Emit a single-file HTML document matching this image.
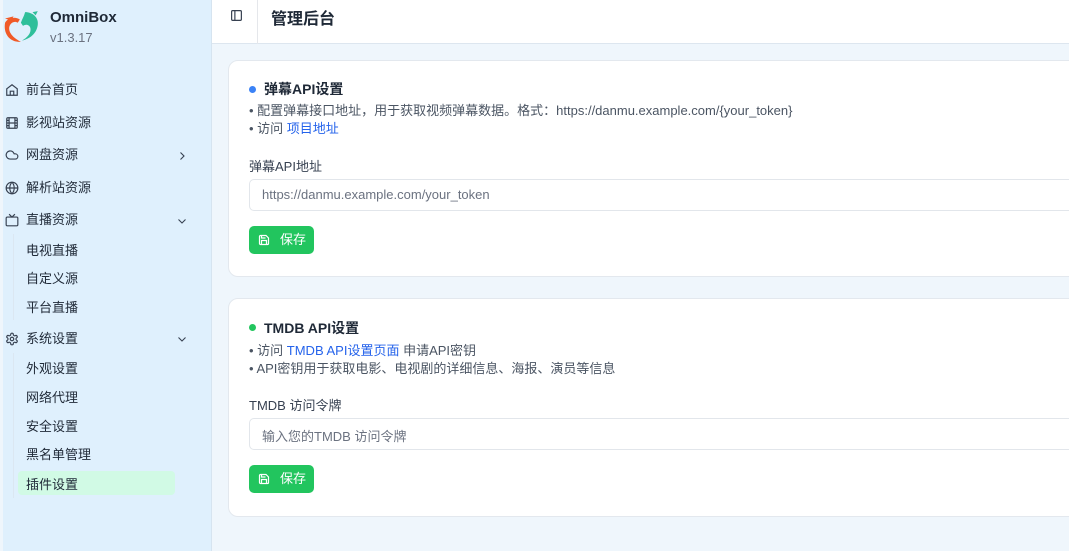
<!DOCTYPE html><html><head><meta charset="utf-8"><style>
*{box-sizing:border-box;margin:0;padding:0}
body{width:1069px;height:551px;overflow:hidden;background:#eff6fc;font-family:"Liberation Sans","Noto Sans CJK SC",sans-serif;color:#1f2937;position:relative}
.sb{position:absolute;left:3px;top:0;width:209px;height:551px;background:#dff0fd;border-right:1px solid #d6e4f0}
.logo{position:absolute;left:4px;top:11px}
.brand{position:absolute;left:50px;top:9px;font-size:15px;font-weight:bold;color:#1f2937}
.ver{position:absolute;left:50px;top:30px;font-size:13px;color:#6b7280}
.it{position:absolute;left:0;font-size:13px;color:#1f2937;height:20px;line-height:20px}
.it svg{position:absolute;left:5px;top:3px}
.it span{position:absolute;left:26px;white-space:nowrap}
.ch{position:absolute;left:176px;width:12px;height:12px}
.sub{position:absolute;left:26px;font-size:13px;white-space:nowrap}
.act{position:absolute;left:18px;top:471px;width:157px;height:24px;background:#d1fae5;border-radius:4px}
.vl{position:absolute;left:13px;width:1px;background:#dbe7f2}
.hd{position:absolute;left:212px;top:0;right:0;height:44px;background:#fff;border-bottom:1px solid #dde6ef}
.hd .t{position:absolute;left:59px;top:5px;font-size:16px;font-weight:bold;color:#1f2937}
.hd .sep{position:absolute;left:45px;top:0;width:1px;height:44px;background:#e5e7eb}
.card{position:absolute;left:228px;width:860px;background:#fff;border:1px solid #e3e8ee;border-radius:10px}
.ti{position:absolute;font-size:14px;font-weight:bold}
.dot{position:absolute;left:249px;width:7px;height:7px;border-radius:50%}
.ln{position:absolute;left:249px;font-size:13px;color:#4b5563;white-space:nowrap}
.ln a{color:#2563eb}
.lab{position:absolute;left:249px;font-size:13px;color:#374151}
.inp{position:absolute;left:249px;width:840px;height:32px;border:1px solid #e2e6eb;border-radius:5px;font-size:13px;color:#6b7280;padding:7px 12px}
.btn{position:absolute;left:249px;width:65px;height:28px;background:#22c55e;border-radius:5px;color:#fff;font-size:13px;line-height:28px}
.btn svg{position:absolute;left:9px;top:8px}
.btn span{position:absolute;left:31px}
</style></head><body>
<div class="sb"></div>
<svg class="logo" width="38" height="34" viewBox="0 0 36 32"><path d="M1 11c3-5 10-6 14-3l-2 3c-3-2-7 0-8 4-1 6 5 11 11 14-9 1-17-6-15-18z" fill="#f05a28"/><path d="M1 7l6 2 2-4z" fill="#f05a28"/><path d="M20 1c7 0 13 5 12 12-1 8-7 13-15 15 5-3 9-7 8-12-1-3-4-4-7-2l-2-3c1-3 3-6 4-10z" fill="#2fbf9a"/><path d="M27 1l5-1-2 4z" fill="#2fbf9a"/></svg>
<div class="brand">OmniBox</div><div class="ver">v1.3.17</div>
<div class="it" style="top:80px"><svg width="14" height="14" viewBox="0 0 24 24" fill="none" stroke="#374151" stroke-width="2"><path d="M3 10l9-7 9 7v11H3z"/><path d="M9 21v-7h6v7"/></svg><span>前台首页</span></div>
<div class="it" style="top:113px"><svg width="14" height="14" viewBox="0 0 24 24" fill="none" stroke="#374151" stroke-width="2"><rect x="3" y="3" width="18" height="18" rx="2"/><path d="M7 3v18M17 3v18M3 12h18M3 7.5h4M3 16.5h4M17 7.5h4M17 16.5h4"/></svg><span>影视站资源</span></div>
<div class="it" style="top:145px"><svg width="14" height="14" viewBox="0 0 24 24" fill="none" stroke="#374151" stroke-width="2"><path d="M17.5 19H9a7 7 0 1 1 6.7-9h1.8a4.5 4.5 0 1 1 0 9z"/></svg><span>网盘资源</span></div>
<svg class="ch" style="top:150px" viewBox="0 0 24 24" fill="none" stroke="#374151" stroke-width="2.2"><path d="M9 5l7 7-7 7"/></svg>
<div class="it" style="top:178px"><svg width="14" height="14" viewBox="0 0 24 24" fill="none" stroke="#374151" stroke-width="2"><circle cx="12" cy="12" r="10"/><path d="M2 12h20M12 2a15 15 0 0 1 0 20M12 2a15 15 0 0 0 0 20"/></svg><span>解析站资源</span></div>
<div class="it" style="top:210px"><svg width="14" height="14" viewBox="0 0 24 24" fill="none" stroke="#374151" stroke-width="2"><rect x="2" y="7" width="20" height="15" rx="2"/><path d="M17 2l-5 5-5-5"/></svg><span>直播资源</span></div>
<svg class="ch" style="top:215px" viewBox="0 0 24 24" fill="none" stroke="#374151" stroke-width="2.2"><path d="M5 9l7 7 7-7"/></svg>
<div class="vl" style="top:234px;height:86px"></div>
<div class="sub" style="top:240px">电视直播</div><div class="sub" style="top:268px">自定义源</div><div class="sub" style="top:297px">平台直播</div>
<div class="it" style="top:329px"><svg width="14" height="14" viewBox="0 0 24 24" fill="none" stroke="#374151" stroke-width="2"><circle cx="12" cy="12" r="3"/><path d="M12.2 2h-.4a2 2 0 0 0-2 2v.2a2 2 0 0 1-1 1.7l-.4.3a2 2 0 0 1-2 0l-.2-.1a2 2 0 0 0-2.7.7l-.2.4a2 2 0 0 0 .7 2.7l.2.1a2 2 0 0 1 1 1.7v.5a2 2 0 0 1-1 1.8l-.2.1a2 2 0 0 0-.7 2.7l.2.4a2 2 0 0 0 2.7.7l.2-.1a2 2 0 0 1 2 0l.4.3a2 2 0 0 1 1 1.7v.2a2 2 0 0 0 2 2h.4a2 2 0 0 0 2-2v-.2a2 2 0 0 1 1-1.7l.4-.3a2 2 0 0 1 2 0l.2.1a2 2 0 0 0 2.7-.7l.2-.4a2 2 0 0 0-.7-2.7l-.2-.1a2 2 0 0 1-1-1.8v-.5a2 2 0 0 1 1-1.7l.2-.1a2 2 0 0 0 .7-2.7l-.2-.4a2 2 0 0 0-2.7-.7l-.2.1a2 2 0 0 1-2 0l-.4-.3a2 2 0 0 1-1-1.7V4a2 2 0 0 0-2-2z"/></svg><span>系统设置</span></div>
<svg class="ch" style="top:333px" viewBox="0 0 24 24" fill="none" stroke="#374151" stroke-width="2.2"><path d="M5 9l7 7 7-7"/></svg>
<div class="vl" style="top:353px;height:145px"></div>
<div class="act"></div>
<div class="sub" style="top:358px">外观设置</div><div class="sub" style="top:387px">网络代理</div><div class="sub" style="top:416px">安全设置</div><div class="sub" style="top:444px">黑名单管理</div><div class="sub" style="top:474px">插件设置</div>
<div class="hd"><svg style="position:absolute;left:18px;top:9px" width="13" height="13" viewBox="0 0 24 24" fill="none" stroke="#374151" stroke-width="2.2"><rect x="3" y="3" width="18" height="18" rx="2"/><path d="M9 3v18"/></svg><div class="sep"></div><div class="t">管理后台</div></div>
<div class="card" style="top:60px;height:217px"></div>
<div class="dot" style="top:86px;background:#3b82f6"></div>
<div class="ti" style="left:264px;top:79px">弹幕API设置</div>
<div class="ln" style="top:100px">• 配置弹幕接口地址，用于获取视频弹幕数据。格式：https://danmu.example.com/{your_token}</div>
<div class="ln" style="top:118px">• 访问 <a>项目地址</a></div>
<div class="lab" style="top:156px">弹幕API地址</div>
<div class="inp" style="top:179px">https://danmu.example.com/your_token</div>
<div class="btn" style="top:226px"><svg width="12" height="12" viewBox="0 0 24 24" fill="none" stroke="#fff" stroke-width="2.4"><path d="M5 3h11l5 5v11a2 2 0 0 1-2 2H5a2 2 0 0 1-2-2V5a2 2 0 0 1 2-2z"/><path d="M7 21v-8h10v8M7 3v5h8"/></svg><span>保存</span></div>
<div class="card" style="top:298px;height:219px"></div>
<div class="dot" style="top:324px;background:#22c55e"></div>
<div class="ti" style="left:264px;top:318px">TMDB API设置</div>
<div class="ln" style="top:340px">• 访问 <a>TMDB API设置页面</a> 申请API密钥</div>
<div class="ln" style="top:358px">• API密钥用于获取电影、电视剧的详细信息、海报、演员等信息</div>
<div class="lab" style="top:395px">TMDB 访问令牌</div>
<div class="inp" style="top:418px">输入您的TMDB 访问令牌</div>
<div class="btn" style="top:465px"><svg width="12" height="12" viewBox="0 0 24 24" fill="none" stroke="#fff" stroke-width="2.4"><path d="M5 3h11l5 5v11a2 2 0 0 1-2 2H5a2 2 0 0 1-2-2V5a2 2 0 0 1 2-2z"/><path d="M7 21v-8h10v8M7 3v5h8"/></svg><span>保存</span></div>
</body></html>
